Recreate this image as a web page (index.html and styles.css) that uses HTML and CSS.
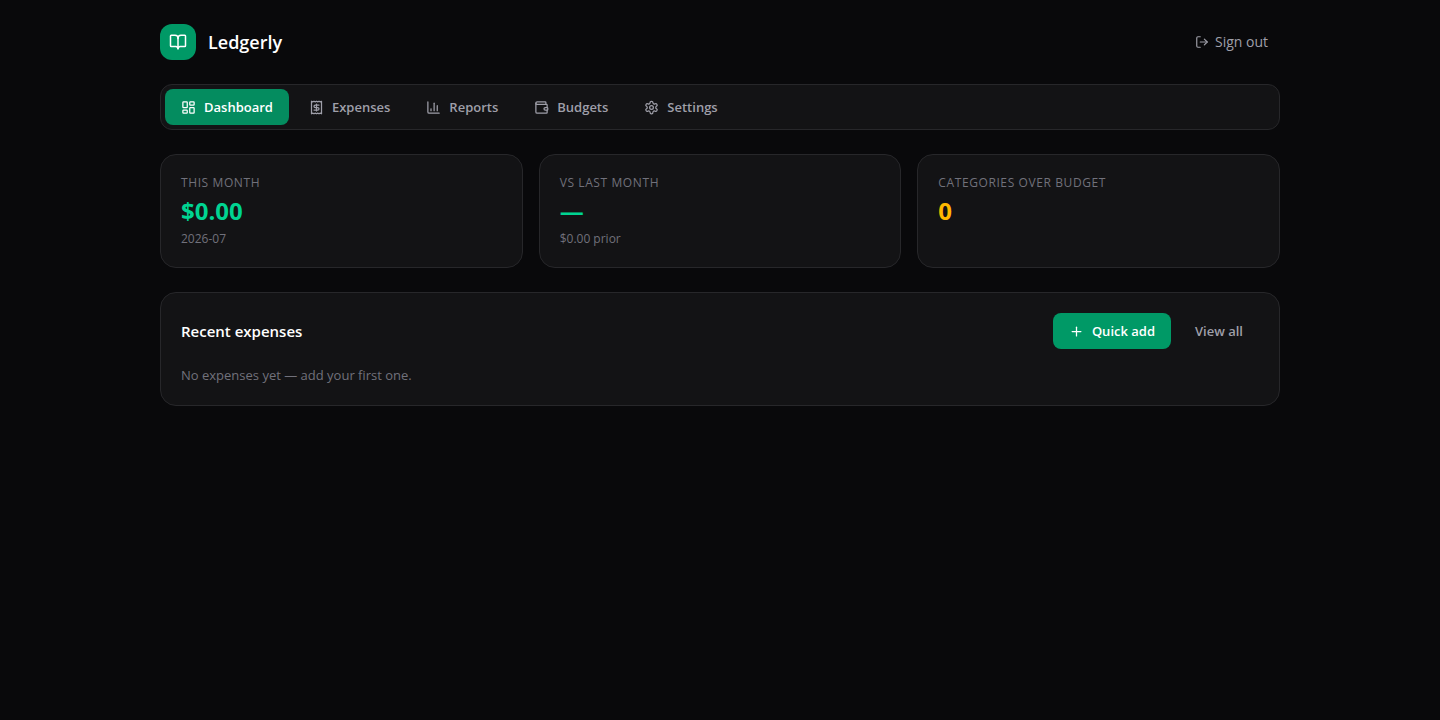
FILE: index.html
```html
<!DOCTYPE html>
<html lang="en">
<head>
    <meta charset="UTF-8">
    <meta name="viewport" content="width=device-width, initial-scale=1.0">
    <title>Ledgerly</title>
    <link rel="stylesheet" href="styles.css">
</head>
<body>
    <div class="page">
        <header class="header">
            <div class="brand">
                <div class="logo">
                    <svg class="icon" width="18" height="18" viewBox="0 0 24 24"><path d="M12 7v14"/><path d="M3 18a1 1 0 0 1-1-1V4a1 1 0 0 1 1-1h5a4 4 0 0 1 4 4 4 4 0 0 1 4-4h5a1 1 0 0 1 1 1v13a1 1 0 0 1-1 1h-6a3 3 0 0 0-3 3 3 3 0 0 0-3-3z"/></svg>
                </div>
                <h1>Ledgerly</h1>
            </div>
            <button class="sign-out" type="button">
                <svg class="icon" width="14" height="14" viewBox="0 0 24 24"><path d="m16 17 5-5-5-5"/><path d="M21 12H9"/><path d="M9 21H5a2 2 0 0 1-2-2V5a2 2 0 0 1 2-2h4"/></svg>
                Sign out
            </button>
        </header>
        <nav class="nav">
            <a class="active" href="#dashboard">
                <svg class="icon" width="15" height="15" viewBox="0 0 24 24"><rect width="7" height="9" x="3" y="3" rx="1"/><rect width="7" height="5" x="14" y="3" rx="1"/><rect width="7" height="9" x="14" y="12" rx="1"/><rect width="7" height="5" x="3" y="16" rx="1"/></svg>
                Dashboard
            </a>
            <a href="#expenses">
                <svg class="icon" width="15" height="15" viewBox="0 0 24 24"><path d="M4 2v20l2-1 2 1 2-1 2 1 2-1 2 1 2-1 2 1V2l-2 1-2-1-2 1-2-1-2 1-2-1-2 1Z"/><path d="M16 8h-6a2 2 0 1 0 0 4h4a2 2 0 1 1 0 4H8"/><path d="M12 17.5v-11"/></svg>
                Expenses
            </a>
            <a href="#reports">
                <svg class="icon" width="15" height="15" viewBox="0 0 24 24"><path d="M3 3v16a2 2 0 0 0 2 2h16"/><path d="M18 17V9"/><path d="M13 17V5"/><path d="M8 17v-3"/></svg>
                Reports
            </a>
            <a href="#budgets">
                <svg class="icon" width="15" height="15" viewBox="0 0 24 24"><path d="M19 7V4a1 1 0 0 0-1-1H5a2 2 0 0 0 0 4h15a1 1 0 0 1 1 1v4h-3a2 2 0 0 0 0 4h3a1 1 0 0 0 1-1v-2a1 1 0 0 0-1-1"/><path d="M3 5v14a2 2 0 0 0 2 2h15a1 1 0 0 0 1-1v-4"/></svg>
                Budgets
            </a>
            <a href="#settings">
                <svg class="icon" width="15" height="15" viewBox="0 0 24 24"><path d="M12.22 2h-.44a2 2 0 0 0-2 2v.18a2 2 0 0 1-1 1.73l-.43.25a2 2 0 0 1-2 0l-.15-.08a2 2 0 0 0-2.73.73l-.22.38a2 2 0 0 0 .73 2.73l.15.1a2 2 0 0 1 1 1.72v.51a2 2 0 0 1-1 1.74l-.15.09a2 2 0 0 0-.73 2.73l.22.38a2 2 0 0 0 2.73.73l.15-.08a2 2 0 0 1 2 0l.43.25a2 2 0 0 1 1 1.73V20a2 2 0 0 0 2 2h.44a2 2 0 0 0 2-2v-.18a2 2 0 0 1 1-1.73l.43-.25a2 2 0 0 1 2 0l.15.08a2 2 0 0 0 2.73-.73l.22-.39a2 2 0 0 0-.73-2.73l-.15-.08a2 2 0 0 1-1-1.74v-.5a2 2 0 0 1 1-1.74l.15-.09a2 2 0 0 0 .73-2.73l-.22-.38a2 2 0 0 0-2.73-.73l-.15.08a2 2 0 0 1-2 0l-.43-.25a2 2 0 0 1-1-1.73V4a2 2 0 0 0-2-2z"/><circle cx="12" cy="12" r="3"/></svg>
                Settings
            </a>
        </nav>
        <main>
            <div class="stats">
                <div class="card stat">
                    <h2>This month</h2>
                    <p class="value">$0.00</p>
                    <p class="note">2026-07</p>
                </div>
                <div class="card stat">
                    <h2>vs last month</h2>
                    <p class="value">—</p>
                    <p class="note">$0.00 prior</p>
                </div>
                <div class="card stat">
                    <h2>Categories over budget</h2>
                    <p class="value warn">0</p>
                </div>
            </div>
            <section class="card">
                <div class="card-head">
                    <h2>Recent expenses</h2>
                    <div class="actions">
                        <button class="btn primary" type="button">
                            <svg class="icon" width="15" height="15" viewBox="0 0 24 24"><path d="M5 12h14"/><path d="M12 5v14"/></svg>
                            Quick add
                        </button>
                        <a class="btn" href="#expenses">View all</a>
                    </div>
                </div>
                <p class="empty">No expenses yet — add your first one.</p>
            </section>
        </main>
    </div>
</body>
</html>
```
FILE: styles.css
```css
*{
    box-sizing: border-box;
    margin: 0;
    padding: 0;
}
body{
    background: #09090b;
    color: #fff;
    font-family: "Segoe UI", "Open Sans", "Noto Sans", sans-serif;
    font-size: 14px;
    line-height: 20px;
}
button{
    font: inherit;
    border: 0;
    background: none;
    cursor: pointer;
}
a{
    text-decoration: none;
}
.page{
    max-width: 1152px;
    margin: 0 auto;
    padding: 24px 16px;
}
.icon{
    flex: none;
    fill: none;
    stroke: currentColor;
    stroke-width: 2;
    stroke-linecap: round;
    stroke-linejoin: round;
}
/* header */
.header, .brand, .card-head, .actions{
    display: flex;
    align-items: center;
}
.header, .card-head{
    justify-content: space-between;
}
.brand{
    gap: 12px;
}
.logo{
    display: flex;
    align-items: center;
    justify-content: center;
    width: 36px;
    height: 36px;
    border-radius: 12px;
    background: #009966;
}
.brand h1{
    font-size: 18px;
    line-height: 28px;
    font-weight: 600;
}
.sign-out{
    display: flex;
    align-items: center;
    gap: 6px;
    padding: 6px 12px;
    color: #9f9fa9;
}
/* nav */
.nav{
    display: flex;
    flex-wrap: wrap;
    gap: 4px;
    margin: 24px 0;
    padding: 4px;
    border: 1px solid #27272a;
    border-radius: 12px;
    background: #131315;
}
.nav a, .btn{
    display: flex;
    align-items: center;
    gap: 8px;
    padding: 8px 16px;
    border-radius: 8px;
    color: #9f9fa9;
    font-size: 13px;
    font-weight: 600;
}
.nav .active{
    background: #048c5f;
    color: #fff;
}
/* cards */
.stats{
    display: grid;
    grid-template-columns: repeat(3, 1fr);
    gap: 16px;
    margin-bottom: 24px;
}
.card{
    padding: 20px;
    border: 1px solid #27272a;
    border-radius: 16px;
    background: #131315;
}
.stat h2{
    color: #71717b;
    font-size: 12px;
    line-height: 16px;
    font-weight: 500;
    letter-spacing: 0.05em;
    text-transform: uppercase;
}
.value{
    margin: 4px 0;
    color: #00d492;
    font-size: 24px;
    line-height: 32px;
    font-weight: 700;
}
.value.warn{
    color: #ffb900;
}
.note{
    color: #71717b;
    font-size: 12px;
    line-height: 16px;
}
.card-head h2{
    font-size: 15px;
    line-height: 24px;
    font-weight: 600;
}
.actions{
    gap: 8px;
}
.btn.primary{
    background: #009966;
    color: #fff;
}
.empty{
    margin-top: 16px;
    color: #71717b;
    font-size: 13px;
}
@media (max-width: 640px){
    .stats{
        grid-template-columns: 1fr;
    }
}
```
